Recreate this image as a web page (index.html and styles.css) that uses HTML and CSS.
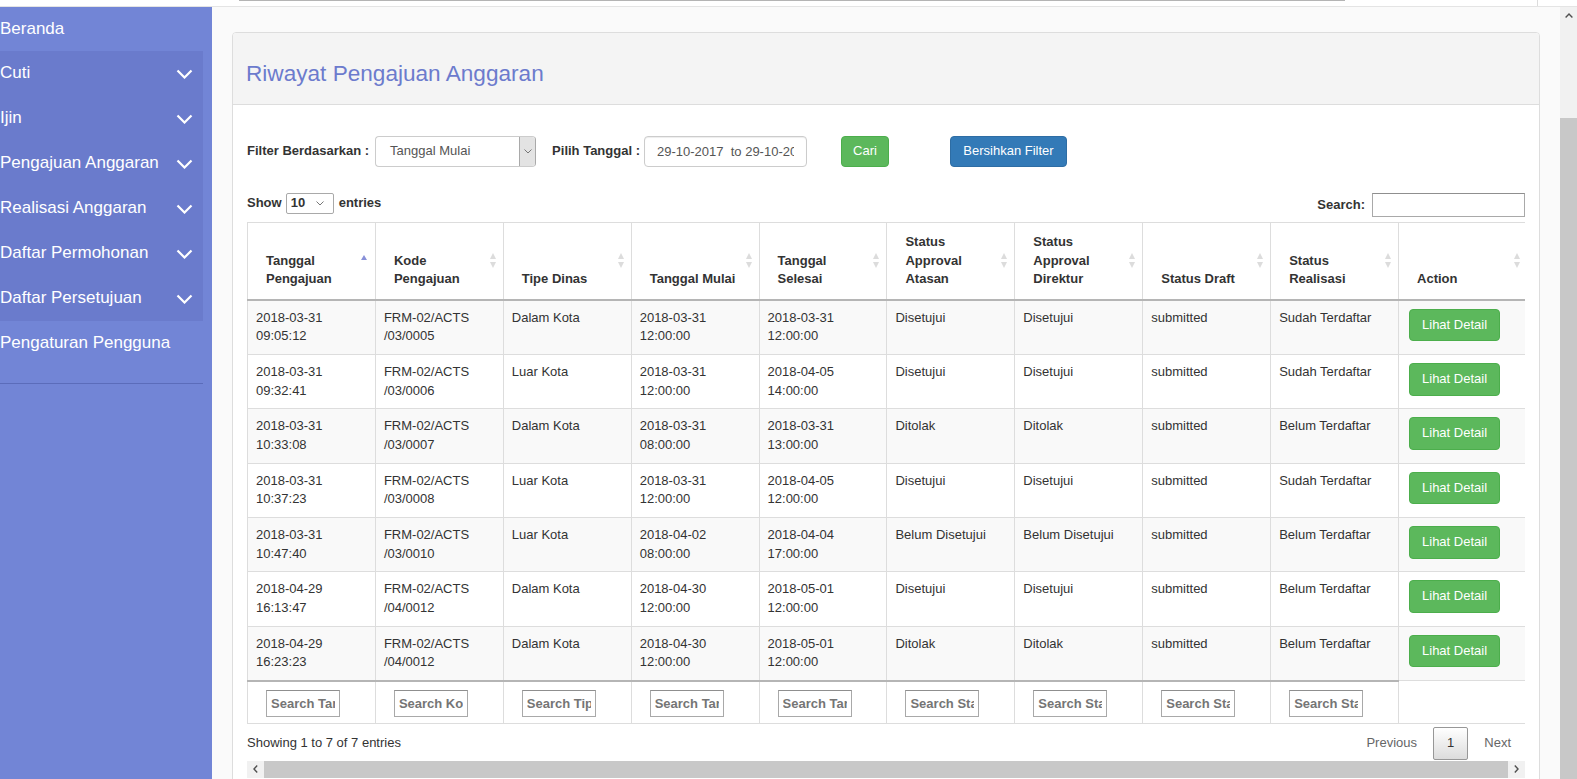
FILE: index.html
```html
<!DOCTYPE html>
<html lang="id">
<head>
<meta charset="utf-8">
<title>Riwayat Pengajuan Anggaran</title>
<link rel="stylesheet" href="styles.css">
</head>
<body>
<div class="topstrip"><div class="topthumb"></div><div class="topcorner"></div></div>
<div class="layout">
  <aside class="sidebar">
    <ul class="nav">
      <li class="nav-item first"><span>Beranda</span></li>
      <li class="group">
        <ul class="nav">
          <li class="nav-item"><span>Cuti</span><svg class="chev" width="17" height="10" viewBox="0 0 17 10"><path d="M1.5 1.5 L8.5 8.5 L15.5 1.5"/></svg></li>
          <li class="nav-item"><span>Ijin</span><svg class="chev" width="17" height="10" viewBox="0 0 17 10"><path d="M1.5 1.5 L8.5 8.5 L15.5 1.5"/></svg></li>
          <li class="nav-item"><span>Pengajuan Anggaran</span><svg class="chev" width="17" height="10" viewBox="0 0 17 10"><path d="M1.5 1.5 L8.5 8.5 L15.5 1.5"/></svg></li>
          <li class="nav-item"><span>Realisasi Anggaran</span><svg class="chev" width="17" height="10" viewBox="0 0 17 10"><path d="M1.5 1.5 L8.5 8.5 L15.5 1.5"/></svg></li>
          <li class="nav-item"><span>Daftar Permohonan</span><svg class="chev" width="17" height="10" viewBox="0 0 17 10"><path d="M1.5 1.5 L8.5 8.5 L15.5 1.5"/></svg></li>
          <li class="nav-item"><span>Daftar Persetujuan</span><svg class="chev" width="17" height="10" viewBox="0 0 17 10"><path d="M1.5 1.5 L8.5 8.5 L15.5 1.5"/></svg></li>
        </ul>
      </li>
      <li class="nav-item"><span>Pengaturan Pengguna</span></li>
    </ul>
    <div class="divider"></div>
  </aside>

  <main class="main">
    <section class="panel">
      <header class="panel-heading"><h2>Riwayat Pengajuan Anggaran</h2></header>
      <div class="panel-body">
        <div class="filter-row">
          <label class="lbl">Filter Berdasarkan :</label>
          <div class="fselect"><span>Tanggal Mulai</span><span class="fselect-btn"><svg width="8" height="5" viewBox="0 0 8 5"><path d="M0.5 0.5 L4 4 L7.5 0.5"/></svg></span></div>
          <label class="lbl lbl-date">Pilih Tanggal :</label>
          <input class="date-input" type="text" value="29-10-2017  to 29-10-2017">
          <button class="btn btn-success btn-cari">Cari</button>
          <button class="btn btn-primary btn-clear">Bersihkan Filter</button>
        </div>

        <div class="dt">
          <div class="dt-top">
            <div class="dt-length"><span>Show</span><div class="lselect"><span>10</span><svg width="8" height="5" viewBox="0 0 8 5"><path d="M0.5 0.5 L4 4 L7.5 0.5"/></svg></div><span>entries</span></div>
            <div class="dt-search"><span>Search:</span><input type="text" class="search-input"></div>
          </div>

          <div class="dt-table-wrap">
            <table class="dt-table">
              <colgroup>
                <col class="c"><col class="c"><col class="c"><col class="c"><col class="c"><col class="c"><col class="c"><col class="c"><col class="c"><col class="c-last">
              </colgroup>
              <thead>
                <tr>
                  <th class="sorting-asc">Tanggal Pengajuan</th>
                  <th class="sorting">Kode Pengajuan</th>
                  <th class="sorting">Tipe Dinas</th>
                  <th class="sorting">Tanggal Mulai</th>
                  <th class="sorting">Tanggal Selesai</th>
                  <th class="sorting">Status Approval Atasan</th>
                  <th class="sorting">Status Approval Direktur</th>
                  <th class="sorting">Status Draft</th>
                  <th class="sorting">Status Realisasi</th>
                  <th class="sorting">Action</th>
                </tr>
              </thead>
              <tbody>
                <tr>
                  <td>2018-03-31<br>09:05:12</td><td>FRM-02/ACTS<br>/03/0005</td><td>Dalam Kota</td><td>2018-03-31<br>12:00:00</td><td>2018-03-31<br>12:00:00</td><td>Disetujui</td><td>Disetujui</td><td>submitted</td><td>Sudah Terdaftar</td><td><a class="btn btn-success btn-detail">Lihat Detail</a></td>
                </tr>
                <tr>
                  <td>2018-03-31<br>09:32:41</td><td>FRM-02/ACTS<br>/03/0006</td><td>Luar Kota</td><td>2018-03-31<br>12:00:00</td><td>2018-04-05<br>14:00:00</td><td>Disetujui</td><td>Disetujui</td><td>submitted</td><td>Sudah Terdaftar</td><td><a class="btn btn-success btn-detail">Lihat Detail</a></td>
                </tr>
                <tr>
                  <td>2018-03-31<br>10:33:08</td><td>FRM-02/ACTS<br>/03/0007</td><td>Dalam Kota</td><td>2018-03-31<br>08:00:00</td><td>2018-03-31<br>13:00:00</td><td>Ditolak</td><td>Ditolak</td><td>submitted</td><td>Belum Terdaftar</td><td><a class="btn btn-success btn-detail">Lihat Detail</a></td>
                </tr>
                <tr>
                  <td>2018-03-31<br>10:37:23</td><td>FRM-02/ACTS<br>/03/0008</td><td>Luar Kota</td><td>2018-03-31<br>12:00:00</td><td>2018-04-05<br>12:00:00</td><td>Disetujui</td><td>Disetujui</td><td>submitted</td><td>Sudah Terdaftar</td><td><a class="btn btn-success btn-detail">Lihat Detail</a></td>
                </tr>
                <tr>
                  <td>2018-03-31<br>10:47:40</td><td>FRM-02/ACTS<br>/03/0010</td><td>Luar Kota</td><td>2018-04-02<br>08:00:00</td><td>2018-04-04<br>17:00:00</td><td>Belum Disetujui</td><td>Belum Disetujui</td><td>submitted</td><td>Belum Terdaftar</td><td><a class="btn btn-success btn-detail">Lihat Detail</a></td>
                </tr>
                <tr>
                  <td>2018-04-29<br>16:13:47</td><td>FRM-02/ACTS<br>/04/0012</td><td>Dalam Kota</td><td>2018-04-30<br>12:00:00</td><td>2018-05-01<br>12:00:00</td><td>Disetujui</td><td>Disetujui</td><td>submitted</td><td>Belum Terdaftar</td><td><a class="btn btn-success btn-detail">Lihat Detail</a></td>
                </tr>
                <tr>
                  <td>2018-04-29<br>16:23:23</td><td>FRM-02/ACTS<br>/04/0012</td><td>Dalam Kota</td><td>2018-04-30<br>12:00:00</td><td>2018-05-01<br>12:00:00</td><td>Ditolak</td><td>Ditolak</td><td>submitted</td><td>Belum Terdaftar</td><td><a class="btn btn-success btn-detail">Lihat Detail</a></td>
                </tr>
              </tbody>
              <tfoot>
                <tr>
                  <th><input class="col-search" type="text" placeholder="Search Tanggal Pengajuan"></th>
                  <th><input class="col-search" type="text" placeholder="Search Kode Pengajuan"></th>
                  <th><input class="col-search" type="text" placeholder="Search Tipe Dinas"></th>
                  <th><input class="col-search" type="text" placeholder="Search Tanggal Mulai"></th>
                  <th><input class="col-search" type="text" placeholder="Search Tanggal Selesai"></th>
                  <th><input class="col-search" type="text" placeholder="Search Status Approval Atasan"></th>
                  <th><input class="col-search" type="text" placeholder="Search Status Approval Direktur"></th>
                  <th><input class="col-search" type="text" placeholder="Search Status Draft"></th>
                  <th><input class="col-search" type="text" placeholder="Search Status Realisasi"></th>
                  <th class="empty"></th>
                </tr>
              </tfoot>
            </table>
          </div>

          <div class="dt-bottom">
            <div class="dt-info">Showing 1 to 7 of 7 entries</div>
            <div class="dt-paginate">
              <a class="pbtn disabled">Previous</a>
              <a class="pbtn current">1</a>
              <a class="pbtn disabled">Next</a>
            </div>
          </div>

          <div class="hscroll">
            <div class="harrow"><svg width="5" height="8" viewBox="0 0 5 8"><path d="M4.2 0.6 L1 4 L4.2 7.4"/></svg></div>
            <div class="hthumb"></div>
            <div class="harrow"><svg width="5" height="8" viewBox="0 0 5 8"><path d="M0.8 0.6 L4 4 L0.8 7.4"/></svg></div>
          </div>
        </div>
      </div>
    </section>
  </main>

  <div class="vscroll">
    <div class="varrow"><svg width="8" height="5" viewBox="0 0 8 5"><path d="M0.6 4.4 L4 1 L7.4 4.4"/></svg></div>
    <div class="vthumb"></div>
  </div>
</div>
</body>
</html>
```

FILE: styles.css
```css
* { box-sizing: border-box; }

html, body {
  margin: 0;
  padding: 0;
}

body {
  width: 1577px;
  height: 779px;
  overflow: hidden;
  background: #fafafa;
  font-family: "Liberation Sans", Arial, sans-serif;
  font-size: 13px;
  line-height: 1.42857;
  color: #333;
}

/* top strip */
.topstrip {
  height: 7px;
  background: #fff;
  border-bottom: 1px solid #e4e4e4;
  display: flex;
}
.topthumb {
  margin-left: 239px;
  width: 1106px;
  height: 1px;
  background: #b4b4b4;
}
.topcorner {
  margin-left: auto;
  width: 40px;
  border-left: 1px solid #dcdcdc;
}

.layout {
  display: flex;
  height: 772px;
}

/* sidebar */
.sidebar {
  width: 212px;
  flex: none;
  background: #7285d6;
  overflow: hidden;
}
.nav {
  list-style: none;
  margin: 0;
  padding: 0;
  width: 203px;
}
.nav-item {
  height: 45px;
  display: flex;
  align-items: center;
  justify-content: space-between;
  padding-right: 10px;
  color: #fff;
  font-size: 17px;
  white-space: nowrap;
}
.nav-item.first { height: 44px; }
.group { background: #6a7bcc; }
.chev path {
  fill: none;
  stroke: #fff;
  stroke-width: 2.2;
}
.divider {
  width: 203px;
  height: 1px;
  margin-top: 17px;
  background: #5b6cba;
}

/* main */
.main {
  flex: 1;
  min-width: 0;
  padding: 25px 20px 0 20px;
  overflow: hidden;
}
.panel {
  background: #fff;
  border: 1px solid #dddddd;
  border-radius: 4px;
}
.panel-heading {
  background: #f4f4f4;
  border-bottom: 1px solid #dddddd;
  border-radius: 3px 3px 0 0;
  padding: 28px 13px 17px;
}
.panel-heading h2 {
  margin: 0;
  font-weight: normal;
  font-size: 22.6px;
  line-height: 26px;
  color: #6c7bcd;
}
.panel-body {
  padding: 30px 14px 40px 14px;
}

/* filter row */
.filter-row {
  display: flex;
  align-items: center;
  height: 32px;
}
.lbl {
  font-weight: bold;
  color: #333;
}
.lbl-date { margin-left: 16px; }
.fselect {
  margin-left: 6px;
  width: 161px;
  height: 31px;
  display: flex;
  border: 1px solid #cccccc;
  border-right-color: #a9a9a9;
  border-radius: 4px;
  overflow: hidden;
  color: #555;
}
.fselect span:first-child {
  padding-left: 14px;
  align-self: center;
}
.fselect-btn {
  margin-left: auto;
  width: 16px;
  background: #e3e3e3;
  border-left: 1px solid #a9a9a9;
  display: flex;
  align-items: center;
  justify-content: center;
}
.fselect-btn path, .lselect path {
  fill: none;
  stroke: #777;
  stroke-width: 1;
}
.date-input {
  margin-left: 4px;
  width: 163px;
  height: 31px;
  padding: 0 12px;
  border: 1px solid #cccccc;
  border-radius: 4px;
  box-shadow: inset 0 1px 1px rgba(0,0,0,.075);
  font: inherit;
  color: #555;
  outline: none;
}
.btn {
  display: inline-flex;
  align-items: center;
  justify-content: center;
  height: 31px;
  padding: 0 11px;
  border: 1px solid transparent;
  border-radius: 4px;
  font: inherit;
  color: #fff;
  white-space: nowrap;
}
.btn-success {
  background: #5cb85c;
  border-color: #4cae4c;
}
.btn-primary {
  background: #337ab7;
  border-color: #2e6da4;
}
.btn-cari {
  margin-left: 34px;
  width: 48px;
  align-self: flex-end;
}
.btn-clear {
  margin-left: 61px;
  width: 117px;
  align-self: flex-end;
}

/* datatable top */
.dt { width: 1278px; }
.dt-top {
  margin-top: 26px;
  display: flex;
  justify-content: space-between;
  align-items: flex-start;
  height: 24px;
}
.dt-length {
  display: flex;
  align-items: center;
  height: 21px;
  font-weight: bold;
}
.lselect {
  margin: 0 5px 0 4px;
  width: 48px;
  height: 21px;
  border: 1px solid #a9a9a9;
  border-radius: 2px;
  display: flex;
  align-items: center;
  padding-left: 4px;
  font-weight: bold;
}
.lselect svg { margin-left: 11px; }
.dt-search {
  display: flex;
  align-items: center;
  height: 24px;
  font-weight: bold;
}
.search-input {
  margin-left: 7px;
  width: 153px;
  height: 24px;
  border: 1px solid #a9a9a9;
  border-top-color: #8f8f8f;
  outline: none;
}

/* table */
.dt-table-wrap {
  margin-top: 5px;
  width: 1278px;
  overflow: hidden;
}
.dt-table {
  width: 1281px;
  border-collapse: collapse;
  table-layout: fixed;
}
.dt-table col.c { width: 127.9px; }
.dt-table th,
.dt-table td {
  border: 1px solid #dddddd;
  text-align: left;
}
.dt-table thead th {
  position: relative;
  padding: 10px 18px;
  vertical-align: bottom;
  font-weight: bold;
  border-bottom: 2px solid #b5b5b5;
}
.dt-table thead th.sorting::before,
.dt-table thead th.sorting::after,
.dt-table thead th.sorting-asc::before {
  content: "";
  position: absolute;
  right: 7px;
  top: 50%;
  width: 0;
  height: 0;
  border-left: 3.5px solid transparent;
  border-right: 3.5px solid transparent;
}
.dt-table thead th.sorting::before {
  margin-top: -8px;
  border-bottom: 6px solid #dcdcdc;
}
.dt-table thead th.sorting::after {
  margin-top: 1px;
  border-top: 6px solid #dcdcdc;
}
.dt-table thead th.sorting-asc::before {
  right: 8px;
  margin-top: -6px;
  border-left-width: 3px;
  border-right-width: 3px;
  border-bottom: 5px solid #8890d8;
}
.dt-table tbody td {
  padding: 8px;
  vertical-align: top;
  line-height: 18.65px;
}
.dt-table tbody tr:nth-child(odd) { background: #f9f9f9; }
.btn-detail {
  display: inline-block;
  height: auto;
  padding: 6px 12px;
  margin-left: 2px;
  line-height: 1.42857;
}
.dt-table tfoot th {
  padding: 8px 18px 6px;
  border-top: 2px solid #b5b5b5;
  font-weight: bold;
}
.dt-table tfoot th.empty { border-top: 1px solid #dddddd; }
.col-search {
  display: block;
  width: 74px;
  height: 27px;
  padding: 1px 4px;
  border: 1px solid #a9a9a9;
  border-top-color: #8f8f8f;
  font: inherit;
  font-weight: bold;
  color: #333;
  outline: none;
}
.col-search::placeholder { color: #757575; }

/* bottom */
.dt-bottom {
  margin-top: 3px;
  height: 33px;
  display: flex;
  justify-content: space-between;
  align-items: center;
}
.dt-paginate { display: flex; }
.pbtn {
  display: inline-block;
  padding: 6px 13px;
  margin-left: 2px;
  border: 1px solid transparent;
  border-radius: 2px;
  color: #666;
  line-height: 1.42857;
}
.pbtn.current {
  color: #333;
  border-color: #979797;
  background: linear-gradient(to bottom, #ffffff 0%, #dcdcdc 100%);
}

/* horizontal scrollbar */
.hscroll {
  margin-top: 1px;
  height: 17px;
  display: flex;
  background: #f1f1f1;
}
.harrow {
  width: 17px;
  height: 17px;
  display: flex;
  align-items: center;
  justify-content: center;
}
.harrow path, .varrow path {
  fill: none;
  stroke: #505050;
  stroke-width: 1.4;
}
.hthumb {
  flex: 1;
  background: #c8c8c8;
}

/* vertical scrollbar */
.vscroll {
  width: 17px;
  flex: none;
  background: #f1f1f1;
  display: flex;
  flex-direction: column;
}
.varrow {
  height: 17px;
  display: flex;
  align-items: center;
  justify-content: center;
}
.vthumb {
  margin-top: 94px;
  flex: 1;
  background: #c8c8c8;
}
```
